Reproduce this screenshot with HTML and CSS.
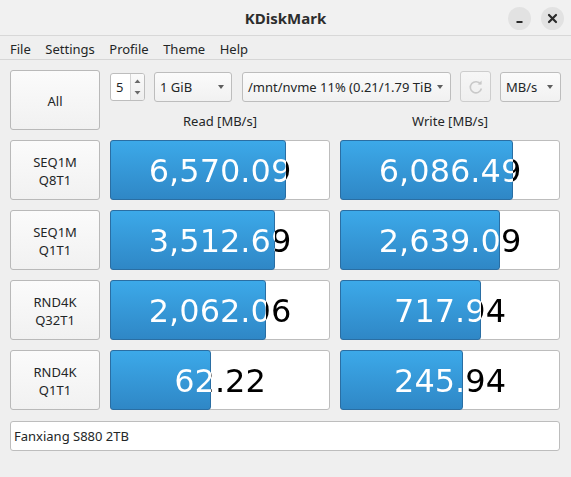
FILE: index.html
```html
<!DOCTYPE html>
<html>
<head>
<meta charset="utf-8">
<title>KDiskMark</title>
<link rel="stylesheet" href="styles.css">
</head>
<body>
<div class="window">
  <header class="titlebar">
    <div class="tb-side"></div>
    <div class="title">KDiskMark</div>
    <div class="tb-side tb-buttons">
      <span class="wbtn"><svg width="23" height="23" viewBox="0 0 23 23"><rect x="8.5" y="14" width="6" height="2" fill="#2b2b2b"/></svg></span>
      <span class="wbtn"><svg width="23" height="23" viewBox="0 0 23 23"><path d="M8 8 L15 15 M15 8 L8 15" stroke="#2b2b2b" stroke-width="2.2" stroke-linecap="round"/></svg></span>
    </div>
  </header>
  <nav class="menubar">
    <span class="menu-item">File</span>
    <span class="menu-item">Settings</span>
    <span class="menu-item">Profile</span>
    <span class="menu-item">Theme</span>
    <span class="menu-item">Help</span>
  </nav>
  <main class="content">
    <div class="grid">
      <div class="btn all">All</div>
      <div class="top">
        <div class="controls">
          <div class="spin">
            <span class="spin-val">5</span>
            <span class="spin-arrows">
              <svg width="13" height="26" viewBox="0 0 13 26"><path d="M3.5 9 L6.5 5.5 L9.5 9 Z" fill="#6a6a6a"/><path d="M3.5 17 L6.5 20.5 L9.5 17 Z" fill="#6a6a6a"/></svg>
            </span>
          </div>
          <div class="combo c-size"><span class="combo-text">1 GiB</span><span class="arrow"></span></div>
          <div class="combo c-dev"><span class="combo-text">/mnt/nvme 11% (0.21/1.79 TiB</span><span class="arrow"></span></div>
          <div class="refresh">
            <svg width="16" height="16" viewBox="0 0 16 16"><path d="M12.6 5.2 A5.6 5.6 0 1 0 13.4 9.5" fill="none" stroke="#c9c9c9" stroke-width="1.6"/><path d="M9.6 5.4 L13.6 5.4 L13.6 1.4 Z" fill="#c9c9c9"/></svg>
          </div>
          <div class="combo c-unit"><span class="combo-text">MB/s</span><span class="arrow"></span></div>
        </div>
        <div class="heads">
          <div class="head">Read [MB/s]</div>
          <div class="head">Write [MB/s]</div>
        </div>
      </div>

      <div class="btn label">SEQ1M<br>Q8T1</div>
      <div class="bar"><div class="fill" style="width:176px"></div><div class="bar-text" style="--p:175px">6,570.09</div></div>
      <div class="bar"><div class="fill" style="width:173px"></div><div class="bar-text" style="--p:172px">6,086.49</div></div>

      <div class="btn label">SEQ1M<br>Q1T1</div>
      <div class="bar"><div class="fill" style="width:165px"></div><div class="bar-text" style="--p:164px">3,512.69</div></div>
      <div class="bar"><div class="fill" style="width:160px"></div><div class="bar-text" style="--p:159px">2,639.09</div></div>

      <div class="btn label">RND4K<br>Q32T1</div>
      <div class="bar"><div class="fill" style="width:156px"></div><div class="bar-text" style="--p:155px">2,062.06</div></div>
      <div class="bar"><div class="fill" style="width:141px"></div><div class="bar-text" style="--p:140px">717.94</div></div>

      <div class="btn label">RND4K<br>Q1T1</div>
      <div class="bar"><div class="fill" style="width:101px"></div><div class="bar-text" style="--p:100px">62.22</div></div>
      <div class="bar"><div class="fill" style="width:123px"></div><div class="bar-text" style="--p:122px">245.94</div></div>
    </div>
    <div class="devname">Fanxiang S880 2TB</div>
  </main>
</div>
</body>
</html>
```

FILE: styles.css
```css
* { box-sizing: border-box; }
html, body { margin: 0; padding: 0; }
body {
  width: 571px;
  height: 477px;
  background: #efefef;
  font-family: "Noto Sans", "DejaVu Sans", sans-serif;
  font-size: 13px;
  color: #232627;
  overflow: hidden;
}
.window { width: 571px; height: 477px; background: #efefef; }

.titlebar {
  height: 36px;
  display: grid;
  grid-template-columns: 1fr auto 1fr;
  align-items: center;
  background: #f1f1f1;
  border-bottom: 1px solid #d8d8d8;
}
.title {
  font-weight: bold;
  font-size: 15px;
  color: #2d2d2d;
  padding-top: 1px;
}
.tb-buttons {
  display: flex;
  justify-content: flex-end;
  gap: 10px;
  padding-right: 7px;
  padding-top: 1px;
}
.wbtn {
  width: 23px;
  height: 23px;
  border-radius: 50%;
  background: #e2e2e2;
  display: flex;
}

.menubar {
  height: 24px;
  display: flex;
  align-items: center;
  gap: 14.5px;
  padding-left: 10px;
  padding-top: 2px;
  border-bottom: 1px solid #d6d6d6;
  background: #efefef;
}
.menu-item { line-height: 18px; }

.content { padding: 10px 11px 0 10px; }
.grid {
  display: grid;
  grid-template-columns: 90px 220px 220px;
  grid-template-rows: repeat(5, 60px);
  column-gap: 10px;
  row-gap: 10px;
}

.btn {
  border: 1px solid #b9b9b9;
  border-radius: 3px;
  background: linear-gradient(#fbfbfb, #f1f1f1);
  display: flex;
  align-items: center;
  justify-content: center;
  text-align: center;
  color: #232627;
}
.all { padding-top: 1px; }
.label { line-height: 18px; padding-top: 2px; }

.top { grid-column: 2 / 4; display: flex; flex-direction: column; }
.controls {
  display: flex;
  align-items: flex-start;
  height: 32px;
  margin-top: 1px;
}
.spin {
  width: 35px;
  height: 28px;
  margin-top: 2px;
  border: 1px solid #bdbdbd;
  border-radius: 3px;
  background: #fff;
  display: flex;
  flex: none;
}
.spin-val { flex: 1; padding-left: 5px; line-height: 26px; }
.spin-arrows {
  width: 14px;
  border-left: 1px solid #d4d4d4;
  background: linear-gradient(#fafafa, #eeeeee);
  border-radius: 0 2px 2px 0;
  display: flex;
}
.combo {
  height: 30px;
  margin-top: 1px;
  border: 1px solid #bdbdbd;
  border-radius: 3px;
  background: linear-gradient(#fbfbfb, #f1f1f1);
  display: flex;
  align-items: center;
  flex: none;
}
.combo-text {
  flex: 1;
  padding-left: 5px;
  white-space: nowrap;
  overflow: hidden;
  line-height: 28px;
}
.arrow {
  width: 0;
  height: 0;
  border-left: 3.5px solid transparent;
  border-right: 3.5px solid transparent;
  border-top: 4px solid #5e5e5e;
  margin: 0 7px 0 8px;
  flex: none;
}
.c-dev .arrow { margin-left: 3px; }
.c-size { width: 78px; margin-left: 9px; }
.c-dev { width: 209px; margin-left: 10px; }
.c-unit { width: 61px; margin-left: 9px; }
.refresh {
  width: 31px;
  height: 31px;
  margin-left: 9px;
  border: 1px solid #cdcdcd;
  border-radius: 3px;
  background: linear-gradient(#f6f6f6, #efefef);
  display: flex;
  align-items: center;
  justify-content: center;
  flex: none;
}

.heads {
  display: grid;
  grid-template-columns: 220px 220px;
  column-gap: 10px;
  margin-top: 9px;
}
.head { text-align: center; line-height: 18px; }

.bar {
  position: relative;
  height: 60px;
  border: 1px solid #bdbdbd;
  border-radius: 3px;
  background: #fff;
}
.fill {
  position: absolute;
  left: -1px;
  top: -1px;
  bottom: -1px;
  border: 1px solid #2a6ea3;
  border-radius: 3px;
  background: linear-gradient(#3ca9e9, #2f87c6);
}
.bar-text {
  position: relative;
  width: 218px;
  height: 58px;
  line-height: 58px;
  text-align: center;
  font-family: "DejaVu Sans", sans-serif;
  font-size: 32px;
  white-space: nowrap;
  padding-top: 1px;
  color: transparent;
  background: linear-gradient(to right, #ffffff var(--p), #000000 var(--p));
  -webkit-background-clip: text;
  background-clip: text;
}

.devname {
  margin-top: 11px;
  height: 30px;
  border: 1px solid #bdbdbd;
  border-radius: 3px;
  background: #fff;
  padding-left: 3px;
  line-height: 28px;
}
```
